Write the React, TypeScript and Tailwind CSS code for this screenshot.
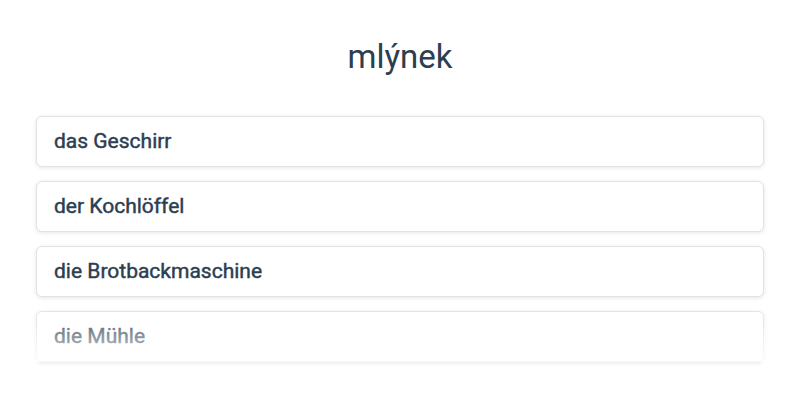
const words = ['das Geschirr', 'der Kochlöffel', 'die Brotbackmaschine', 'die Mühle'];

export default function App() {
  return (
    <div className="w-[800px] h-[400px] bg-white font-['Roboto',sans-serif] text-[#2c3e50]">
      <h1 className="pt-[37px] text-center text-[33px] leading-[40px]">mlýnek</h1>
      <div className="relative mt-[39px] px-9">
        <div className="flex flex-col gap-[14px]">
          {words.map((w) => (
            <div
              key={w}
              className="h-[51px] flex items-center px-[17px] rounded-md border border-[#e2e2e2] bg-white shadow-[0_1px_4px_rgba(0,0,0,0.1)] text-[21px] [-webkit-text-stroke:0.45px_currentColor]"
            >
              {w}
            </div>
          ))}
        </div>
        <div className="pointer-events-none absolute left-0 right-0 bottom-0 h-[56px] bg-gradient-to-b from-white/0 to-white/80" />
      </div>
    </div>
  );
}
